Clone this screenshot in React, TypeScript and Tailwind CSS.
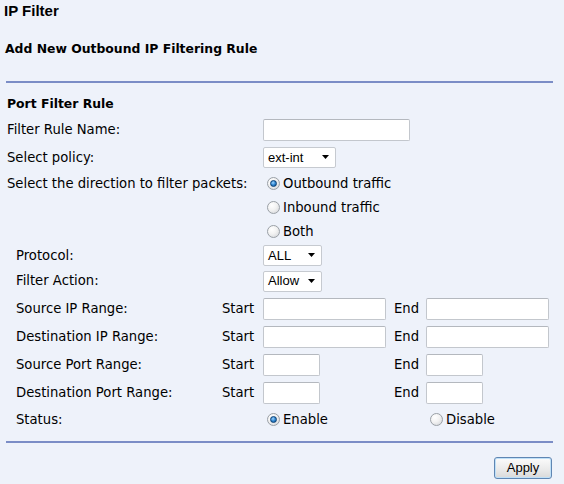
import React from "react";

const verdana = { fontFamily: '"DejaVu Sans", Verdana, sans-serif' };
const arial = { fontFamily: '"Liberation Sans", Arial, sans-serif' };

function Radio({ checked }: { checked?: boolean }) {
  return (
    <span className="inline-flex items-center justify-center w-[13px] h-[13px] rounded-full border border-[#9aa0a6] bg-[radial-gradient(circle_at_35%_30%,#ffffff_0%,#f2f2f2_45%,#cfd2d6_100%)] shrink-0">
      {checked && (
        <span className="w-[7px] h-[7px] rounded-full border border-[#0b3f73] bg-[radial-gradient(circle_at_40%_35%,#9fd4ff_0%,#2f86d0_50%,#0d4f92_100%)]" />
      )}
    </span>
  );
}

function Select({ value, w }: { value: string; w: string }) {
  return (
    <div
      className={`${w} h-[21px] bg-white border border-[#c6cad0] rounded-[2px] flex items-center justify-between pl-[4px] pr-[4px] text-[13px] text-black`}
      style={arial}
    >
      <span>{value}</span>
      <svg width="8" height="5" viewBox="0 0 8 5" className="mr-[1px]">
        <path d="M0 0 H7 L3.5 4 Z" fill="#000" />
      </svg>
    </div>
  );
}

function TextBox({ w }: { w: string }) {
  return (
    <input
      type="text"
      className={`${w} h-[22px] bg-white border border-[#c3c7cd] border-t-[#b4b8be] rounded-[2px] outline-none px-1 text-[13px]`}
      style={arial}
    />
  );
}

function RangeRow({ label, wide }: { label: string; wide: boolean }) {
  return (
    <div className="h-[28px] flex items-center pt-[1px]">
      <div className="w-[222px] pl-[16px]">{label}</div>
      <div className="w-[41px]">Start</div>
      <div className="w-[131px] flex">
        <TextBox w={wide ? "w-[123px]" : "w-[57px]"} />
      </div>
      <div className="w-[32px]">End</div>
      <TextBox w={wide ? "w-[123px]" : "w-[57px]"} />
    </div>
  );
}

export default function App() {
  return (
    <div className="w-[564px] h-[484px] bg-[#eef2fa] text-black overflow-hidden" style={verdana}>
      <div className="h-[22px] flex items-center pl-[4px] text-[15px] font-bold" style={arial}>
        IP Filter
      </div>
      <div className="mt-[16px] h-[22px] flex items-center pl-[5px] text-[12.4px] font-bold">
        Add New Outbound IP Filtering Rule
      </div>
      <div className="mt-[21px] ml-[6px] mr-[11px] border-t-2 border-[#7b8dc6]" />
      <div className="mt-[11px] h-[20px] flex items-center pl-[7px] text-[12.4px] font-bold">
        Port Filter Rule
      </div>

      <div className="mt-[2px] text-[13.2px]">
        <div className="h-[27px] flex items-center pt-[1px]">
          <div className="w-[263px] pl-[7px]">Filter Rule Name:</div>
          <TextBox w="w-[147px]" />
        </div>
        <div className="h-[28px] flex items-center pt-[1px]">
          <div className="w-[263px] pl-[7px]">Select policy:</div>
          <Select value="ext-int" w="w-[73px]" />
        </div>
        <div className="h-[24px] flex items-center pt-[1px]">
          <div className="w-[267px] pl-[7px]">Select the direction to filter packets:</div>
          <Radio checked />
          <span className="ml-[3px]">Outbound traffic</span>
        </div>
        <div className="h-[24px] flex items-center pt-[1px]">
          <div className="w-[267px]" />
          <Radio />
          <span className="ml-[3px]">Inbound traffic</span>
        </div>
        <div className="h-[24px] flex items-center pt-[1px]">
          <div className="w-[267px]" />
          <Radio />
          <span className="ml-[3px]">Both</span>
        </div>
        <div className="h-[24px] flex items-center pt-[1px]">
          <div className="w-[263px] pl-[16px]">Protocol:</div>
          <Select value="ALL" w="w-[59px]" />
        </div>
        <div className="h-[27px] flex items-center pt-[1px]">
          <div className="w-[263px] pl-[16px]">Filter Action:</div>
          <Select value="Allow" w="w-[59px]" />
        </div>
        <RangeRow label="Source IP Range:" wide />
        <RangeRow label="Destination IP Range:" wide />
        <RangeRow label="Source Port Range:" wide={false} />
        <RangeRow label="Destination Port Range:" wide={false} />
        <div className="h-[26px] flex items-center pt-[1px]">
          <div className="w-[267px] pl-[16px]">Status:</div>
          <div className="w-[163px] flex items-center">
            <Radio checked />
            <span className="ml-[3px]">Enable</span>
          </div>
          <Radio />
          <span className="ml-[3px]">Disable</span>
        </div>
      </div>

      <div className="mt-[9px] ml-[6px] mr-[11px] border-t-2 border-[#7b8dc6]" />
      <div className="mt-[14px] flex justify-end pr-[12px]">
        <button
          className="w-[58px] h-[22px] rounded-[3px] border border-[#5f86b3] bg-[linear-gradient(#fbfbfb,#e9e9e9_60%,#d9d9d9)] shadow-[inset_0_0_0_1px_#bfe0f8] text-[13px] text-black flex items-center justify-center"
          style={arial}
        >
          Apply
        </button>
      </div>
    </div>
  );
}
